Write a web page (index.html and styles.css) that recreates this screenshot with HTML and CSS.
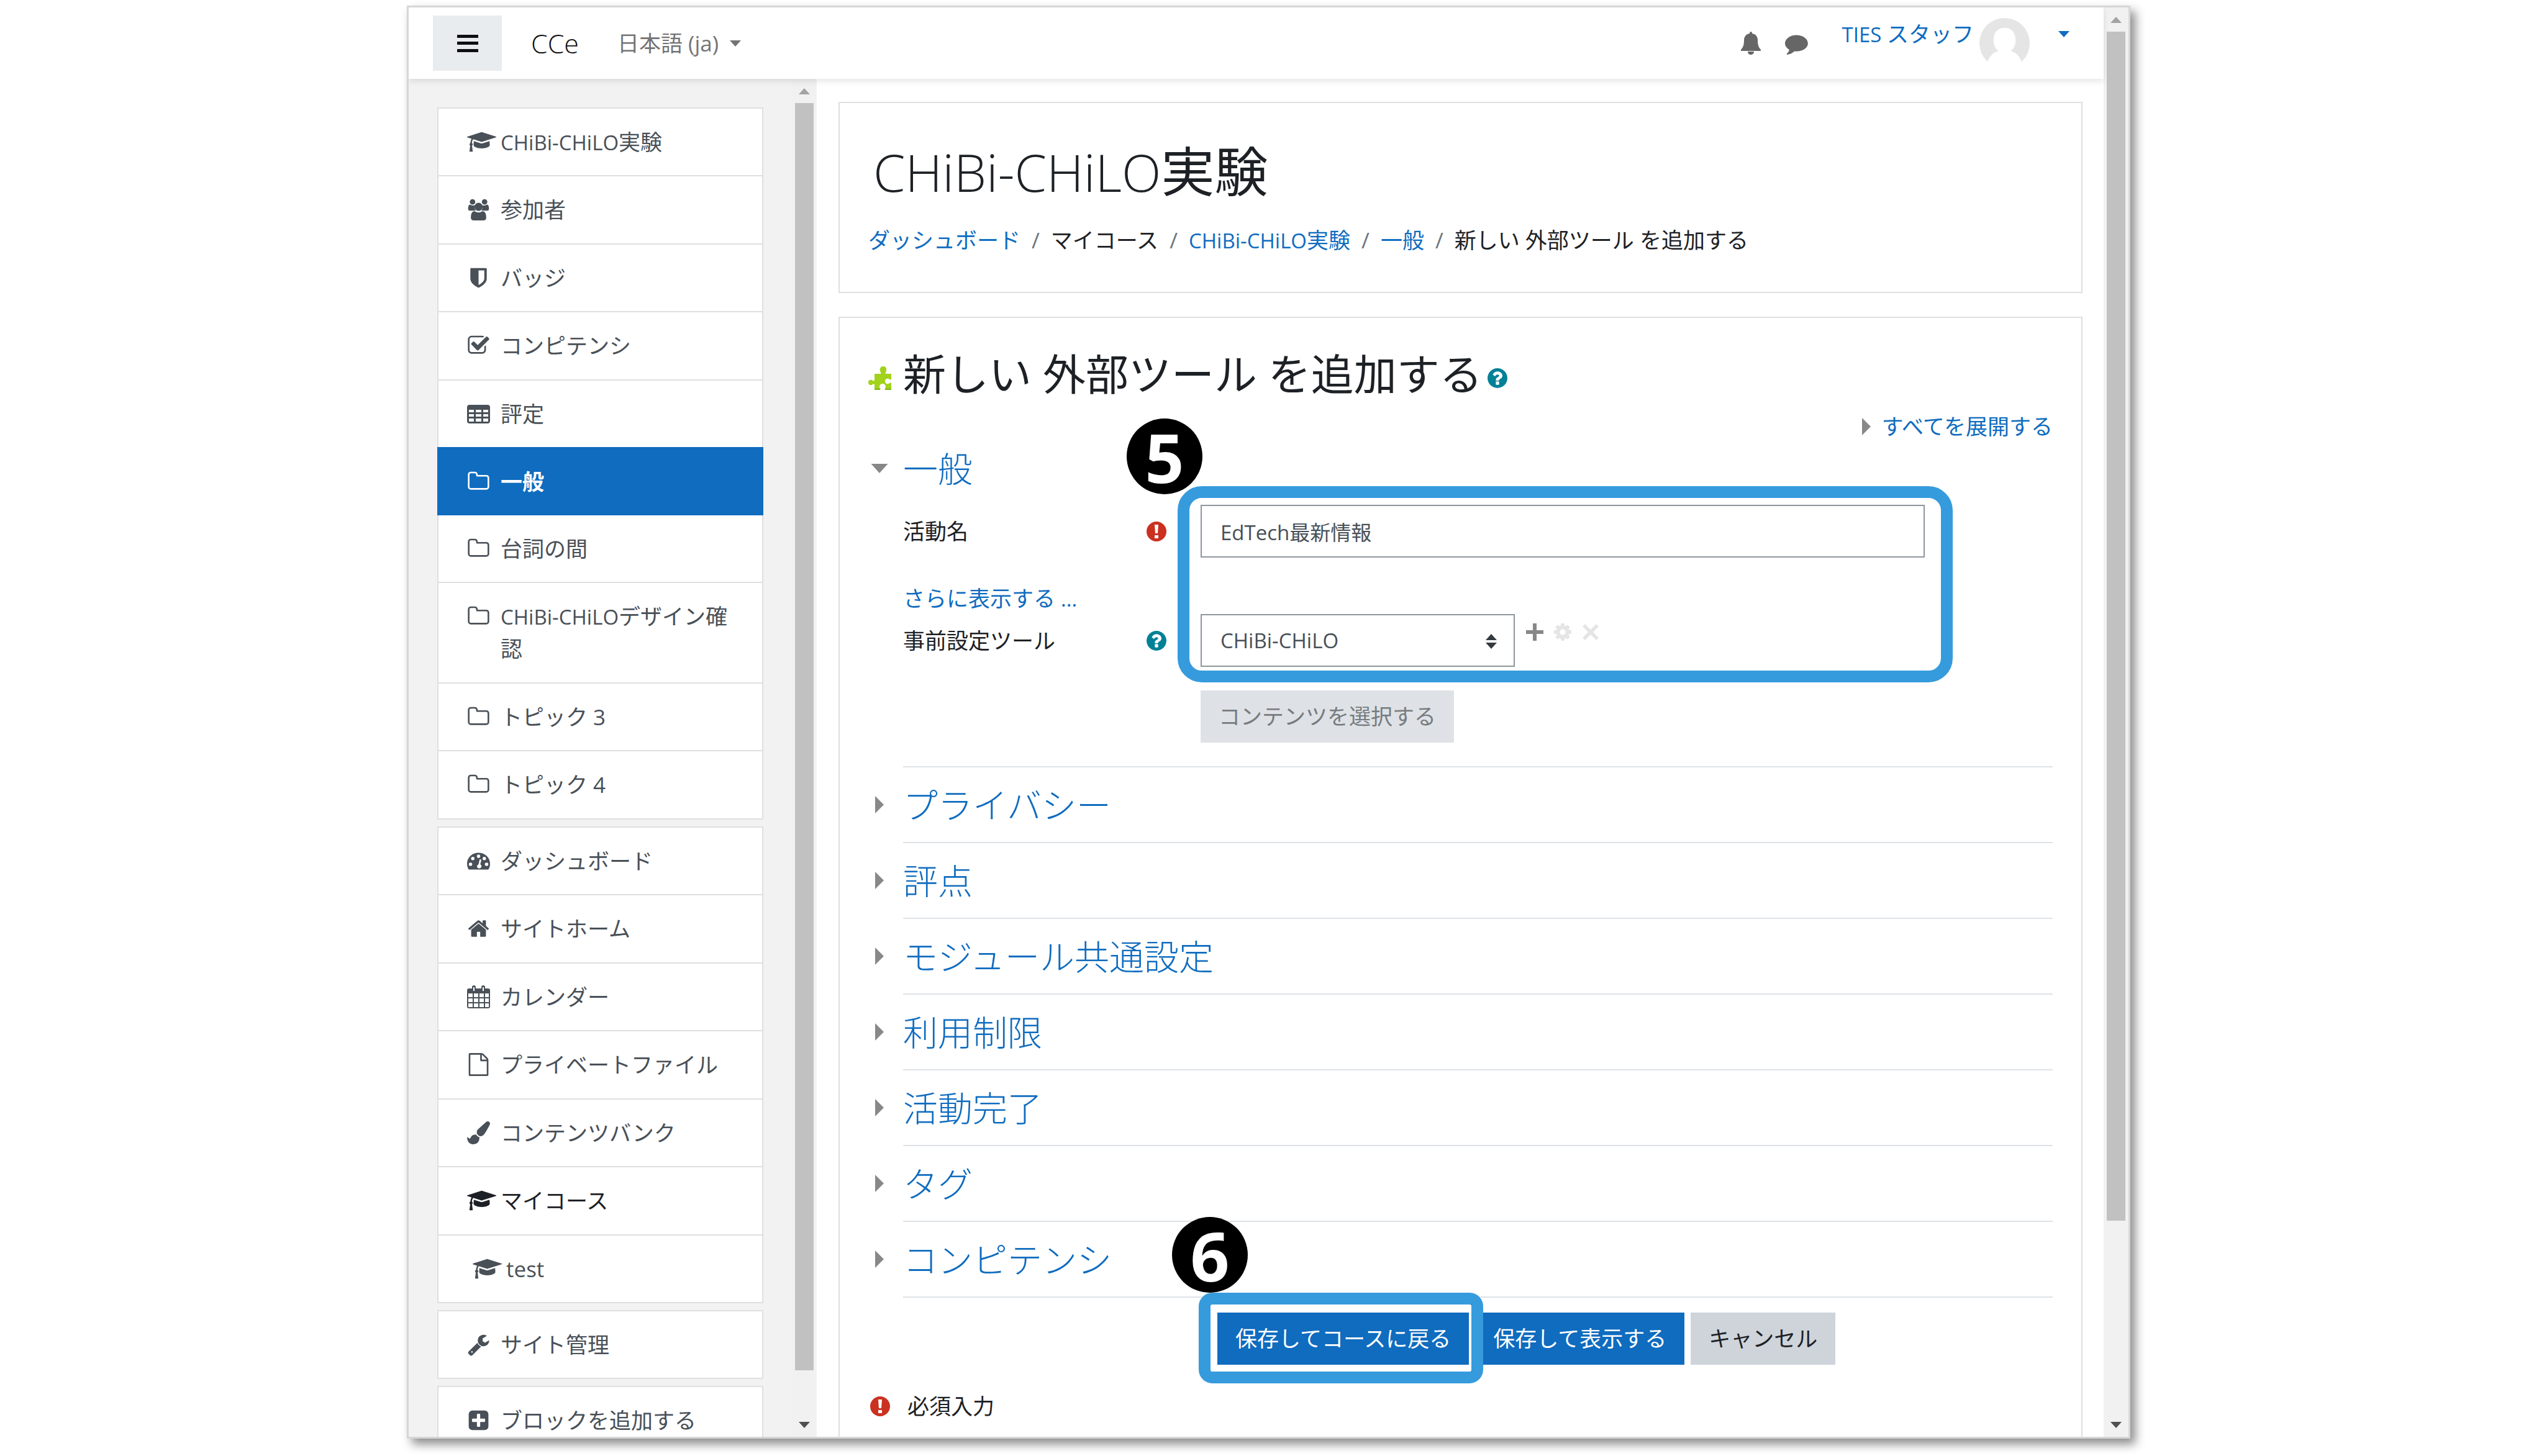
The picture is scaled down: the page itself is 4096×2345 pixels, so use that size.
FILE: index.html
```html
<!DOCTYPE html>
<html lang="ja">
<head>
<meta charset="utf-8">
<meta name="viewport" content="width=device-width, initial-scale=1">
<title>新しい 外部ツール を追加する</title>
<link rel="stylesheet" href="styles.css">
</head>
<body>
<svg class="sprite" aria-hidden="true">
  <symbol id="i-cap" viewBox="0 0 2304 1792"><path d="M1774 836l18 316q4 69-82 128t-235 93.500-323 34.500-323-34.500-235-93.500-82-128l18-316 574 181q22 7 48 7t48-7zm530-324q0 23-22 31l-1120 352q-4 1-10 1t-10-1l-652-206q-43 34-71 111.500t-34 178.500q63 36 63 109 0 69-58 107l58 433q2 14-8 25-9 11-24 11h-192q-15 0-24-11-10-11-8-25l58-433q-58-38-58-107 0-73 65-111 11-207 98-330l-333-104q-22-8-22-31t22-31l1120-352q4-1 10-1t10 1l1120 352q22 8 22 31z"/></symbol>
  <symbol id="i-users" viewBox="0 0 38 42"><circle cx="8" cy="7" r="5"/><circle cx="30" cy="7" r="5"/><path d="M0 20c0-5 1-8 4-8 2 2 6 2 8 1-1 5 0 7 2 10H3c-2 0-3-1-3-3zM38 20c0-5-1-8-4-8-2 2-6 2-8 1 1 5 0 7-2 10h11c2 0 3-1 3-3z"/><circle cx="19" cy="16" r="7.500"/><path d="M5 36c0-8 2-12 7-12 4 3 10 3 14 0 5 0 7 4 7 12 0 3-2 5-5 5H10c-3 0-5-2-5-5z"/></symbol>
  <symbol id="i-shield" viewBox="0 0 1792 1792"><path d="M1344 960v-640h-448v1137q119-63 213-137 235-184 235-360zm192-768v768q0 86-33.500 170.500t-83 150-118 127.500-126.500 103-121 77.500-89.500 49.500-42.500 20q-12 6-26 6t-26-6q-16-7-42.500-20t-89.500-49.500-121-77.500-126.500-103-118-127.500-83-150-33.500-170.500v-768q0-26 19-45t45-19h1152q26 0 45 19t19 45z"/></symbol>
  <symbol id="i-check" viewBox="0 0 1792 1792"><path d="M1472 930v318q0 119-84.500 203.500t-203.500 84.500h-832q-119 0-203.500-84.500t-84.500-203.500v-832q0-119 84.500-203.500t203.500-84.500h832q63 0 117 25 15 7 18 23 3 17-9 29l-49 49q-10 10-23 10-3 0-9-2-23-6-45-6h-832q-66 0-113 47t-47 113v832q0 66 47 113t113 47h832q66 0 113-47t47-113v-254q0-13 9-22l64-64q10-10 23-10 6 0 12 3 20 8 20 29zm231-489l-814 814q-24 24-57 24t-57-24l-430-430q-24-24-24-57t24-57l110-110q24-24 57-24t57 24l263 263 647-647q24-24 57-24t57 24l110 110q24 24 24 57t-24 57z"/></symbol>
  <symbol id="i-table" viewBox="0 0 37 37"><path fill-rule="evenodd" d="M4 4h29q4 0 4 4v22q0 4-4 4H4q-4 0-4-4V8q0-4 4-4zM3 12v4h8v-4zm11 0v4h9v-4zm12 0v4h8v-4zM3 19v4h8v-4zm11 0v4h9v-4zm12 0v4h8v-4zM3 26v5h8v-5zm11 0v5h9v-5zm12 0v5h8v-5z"/></symbol>
  <symbol id="i-folder" viewBox="0 0 1792 1792"><path d="M1600 1312v-704q0-40-28-68t-68-28h-704q-40 0-68-28t-28-68v-64q0-40-28-68t-68-28h-320q-40 0-68 28t-28 68v960q0 40 28 68t68 28h1216q40 0 68-28t28-68zm128-704v704q0 92-66 158t-158 66h-1216q-92 0-158-66t-66-158v-960q0-92 66-158t158-66h320q92 0 158 66t66 158v32h672q92 0 158 66t66 158z"/></symbol>
  <symbol id="i-dash" viewBox="0 0 40 32"><path fill-rule="evenodd" d="M20 2C9 2 0 10 0 21c0 4 1 7 3 10h34c2-3 3-6 3-10C40 10 31 2 20 2zM6 19a3 3 0 1 1 0 6 3 3 0 0 1 0-6zm4-10a3 3 0 1 1 0 6 3 3 0 0 1 0-6zm10-4a3 3 0 1 1 0 6 3 3 0 0 1 0-6zm10 4a3 3 0 1 1 0 6 3 3 0 0 1 0-6zm4 10a3 3 0 1 1 0 6 3 3 0 0 1 0-6zM22 13l3 1-2 8c3 2 3 6-1 7-4 1-7-4-2-7z"/></symbol>
  <symbol id="i-home" viewBox="0 0 1792 1792"><path d="M1472 992v480q0 26-19 45t-45 19h-384v-384h-256v384h-384q-26 0-45-19t-19-45v-480l1-6 575-474 575 474q1 2 1 6zm223-69l-62 74q-8 9-21 11h-3q-13 0-21-7l-692-577-692 577q-12 8-24 7-13-2-21-11l-62-74q-8-10-7-23.500t11-21.500l719-599q32-26 76-26t76 26l244 204v-195q0-14 9-23t23-9h192q14 0 23 9t9 23v408l219 182q10 8 11 21.500t-7 23.500z"/></symbol>
  <symbol id="i-calendar" viewBox="0 0 37 37"><path fill-rule="evenodd" d="M3 5h5V3q0-3 3-3t3 3v2h9V3q0-3 3-3t3 3v2h5q3 0 3 3v26q0 3-3 3H3q-3 0-3-3V8q0-3 3-3zm7-2v6h2V3zm15 0v6h2V3zM2 13v6h7v-6zm9 0v6h7v-6zm9 0v6h7v-6zm9 0v6h6v-6zM2 21v6h7v-6zm9 0v6h7v-6zm9 0v6h7v-6zm9 0v6h6v-6zM2 29v6h7v-6zm9 0v6h7v-6zm9 0v6h7v-6zm9 0v6h6v-6z"/></symbol>
  <symbol id="i-file" viewBox="0 0 1792 1792"><path d="M1596 380q28 28 48 76t20 88v1152q0 40-28 68t-68 28h-1344q-40 0-68-28t-28-68v-1600q0-40 28-68t68-28h896q40 0 88 20t76 48zm-444-244v376h376q-10-29-22-41l-313-313q-12-12-41-22zm384 1528v-1024h-416q-40 0-68-28t-28-68v-416h-768v1536h1280z"/></symbol>
  <symbol id="i-brush" viewBox="0 0 1792 1792"><path d="M1615 0q70 0 122.500 46.500t52.500 116.500q0 63-45 151-332 629-465 752-97 91-218 91-126 0-216.500-92.500t-90.500-219.500q0-128 92-212l638-579q59-54 130-54zm-909 1034q39 76 106.500 130t150.500 76l1 71q4 213-129.500 347t-348.500 134q-123 0-218-46.500t-152.500-127.500-86.500-183-29-220q7 5 41 30t62 44.500 59 36.500 46 17q41 0 55-37 25-66 57.500-112.500t69.500-76 88-47.500 103-25.500 125-10.500z"/></symbol>
  <symbol id="i-wrench" viewBox="0 0 1792 1792"><path d="M448 1472q0-26-19-45t-45-19-45 19-19 45 19 45 45 19 45-19 19-45zm644-420l-682 682q-37 37-90 37-52 0-91-37l-106-108q-38-36-38-90 0-53 38-91l681-681q39 98 114.500 173.500t173.500 114.500zm634-435q0 39-23 106-47 134-164.500 217.500t-258.500 83.500q-185 0-316.500-131.500t-131.500-316.500 131.500-316.500 316.500-131.500q58 0 121.500 16.500t107.500 46.500q16 11 16 28t-16 28l-293 169v224l193 107q5-3 79-48.500t135.500-81 70.500-35.500q15 0 23.500 10t8.500 25z"/></symbol>
  <symbol id="i-plusbox" viewBox="0 0 1792 1792"><path d="M1408 960v-128q0-26-19-45t-45-19h-320v-320q0-26-19-45t-45-19h-128q-26 0-45 19t-19 45v320h-320q-26 0-45 19t-19 45v128q0 26 19 45t45 19h320v320q0 26 19 45t45 19h128q26 0 45-19t19-45v-320h320q26 0 45-19t19-45zm256-544v960q0 119-84.500 203.500t-203.500 84.500h-960q-119 0-203.500-84.500t-84.500-203.500v-960q0-119 84.500-203.500t203.500-84.500h960q119 0 203.500 84.500t84.500 203.500z"/></symbol>
  <symbol id="i-help" viewBox="128 128 1536 1536"><path d="M1024 1376v-192q0-14-9-23t-23-9h-192q-14 0-23 9t-9 23v192q0 14 9 23t23 9h192q14 0 23-9t9-23zm256-672q0-88-55.500-163t-138.500-116-170-41q-243 0-371 213-15 24 8 42l132 100q7 6 19 6 16 0 25-12 53-68 86-92 34-24 86-24 48 0 85.500 26t37.500 59q0 38-20 61t-68 45q-63 28-115.500 86.500t-52.500 125.500v36q0 14 9 23t23 9h192q14 0 23-9t9-23q0-19 21.500-49.500t54.500-49.500q32-18 49-28.500t46-35 44.500-48 28-60.500 12.500-81zm384 192q0 209-103 385.500t-279.500 279.500-385.500 103-385.500-103-279.500-279.500-103-385.500 103-385.500 279.500-279.500 385.500-103 385.500 103 279.500 279.500 103 385.500z"/></symbol>
  <symbol id="i-required" viewBox="0 0 32 32"><path fill-rule="evenodd" d="M16 0a16 16 0 1 1 0 32 16 16 0 0 1 0-32zM13 5l1 14h4l1-14zM13 22v5h6v-5z"/></symbol>
  <symbol id="i-bell" viewBox="0 0 32 37"><path d="M16 0q2 0 2 3c6 1 9 5 9 11 0 8 2 12 5 15v2H0v-2c3-3 5-7 5-15 0-6 3-10 9-11q0-3 2-3zM11 32h10c0 3-2 5-5 5s-5-2-5-5z"/></symbol>
  <symbol id="i-comment" viewBox="0 0 1792 1792"><path d="M1792 896q0 174-120 321.500t-326 233-450 85.500q-70 0-145-8-198 175-460 242-49 14-114 22-17 2-30.500-9t-17.500-29q-3-6 8-32l15-18q60-64 97-107t59-110l26-76q-157-89-247.500-220t-90.500-281q0-130 71-248.500t191-204.500 286-136.500 348-50.500q244 0 450 85.500t326 233 120 321.500z"/></symbol>
  <symbol id="i-gear" viewBox="128 128 1536 1536"><path d="M1152 896q0-106-75-181t-181-75-181 75-75 181 75 181 181 75 181-75 75-181zm512-109v222q0 12-8 23t-20 13l-185 28q-19 54-39 91 35 50 107 138 10 12 10 25t-9 23q-27 37-99 108t-94 71q-12 0-26-9l-138-108q-44 23-91 38-16 136-29 186-7 28-36 28h-222q-14 0-24.500-8.500t-11.500-21.500l-28-184q-49-16-90-37l-141 107q-10 9-25 9-14 0-25-11-126-114-165-168-7-10-7-23 0-12 8-23 15-21 51-66.500t54-70.500q-27-50-41-99l-183-27q-13-2-21-12.500t-8-23.500v-222q0-12 8-23t19-13l186-28q14-46 39-92-40-57-107-138-10-12-10-24 0-10 9-23 26-36 98.500-107.500t94.500-71.500q13 0 26 10l138 107q44-23 91-38 16-136 29-186 7-28 36-28h222q14 0 24.500 8.500t11.500 21.500l28 184q49 16 90 37l142-107q9-9 24-9 13 0 25 10 129 119 165 170 7 8 7 22 0 12-8 23-15 21-51 66.500t-54 70.500q26 50 41 98l183 28q13 2 21 12.500t8 23.500z"/></symbol>
  <symbol id="i-up" viewBox="0 0 18 10"><path d="M9 0l9 10H0z"/></symbol>
  <symbol id="i-down" viewBox="0 0 18 10"><path d="M0 0h18l-9 10z"/></symbol>
  <symbol id="i-right" viewBox="0 0 14 28"><path d="M0 0l14 14L0 28z"/></symbol>
</svg>

<div class="window">
  <div class="app">
    <header class="navbar">
      <button class="menu-toggle" type="button" aria-label="サイドパネル">
        <svg viewBox="0 0 34 28"><path d="M0 0h34v5H0zM0 11h34v5H0zM0 23h34v5H0z"/></svg>
      </button>
      <a class="brand" href="#">CCe</a>
      <a class="language" href="#">日本語 (ja)<svg class="caret"><use href="#i-down"/></svg></a>
      <div class="tools">
        <a href="#" aria-label="通知"><svg class="bell"><use href="#i-bell"/></svg></a>
        <a href="#" aria-label="メッセージ"><svg class="comment"><use href="#i-comment"/></svg></a>
      </div>
      <a class="user" href="#">
        <span><span class="latin">TIES </span>スタッフ</span>
        <svg class="avatar" viewBox="0 0 82 82"><circle cx="41" cy="41" r="41" fill="#e5e5e5"/><path d="M41 16c12 0 18 9 18 20 0 9-4 15-8 18 10 2 18 11 20 28H11c2-17 10-26 20-28-4-3-8-9-8-18 0-11 6-20 18-20z" fill="#fff"/></svg>
        <svg class="caret"><use href="#i-down"/></svg>
      </a>
    </header>

    <div class="shell">
      <aside class="drawer">
        <nav class="drawer-nav">
          <ul class="list">
            <li><a href="#"><svg class="icon wide"><use href="#i-cap"/></svg><span><span class="latin">CHiBi-CHiLO</span>実験</span></a></li>
            <li><a href="#"><svg class="icon"><use href="#i-users"/></svg><span>参加者</span></a></li>
            <li><a href="#"><svg class="icon"><use href="#i-shield"/></svg><span>バッジ</span></a></li>
            <li><a href="#"><svg class="icon"><use href="#i-check"/></svg><span>コンピテンシ</span></a></li>
            <li><a href="#"><svg class="icon"><use href="#i-table"/></svg><span>評定</span></a></li>
            <li class="active"><a href="#"><svg class="icon"><use href="#i-folder"/></svg><span>一般</span></a></li>
            <li><a href="#"><svg class="icon"><use href="#i-folder"/></svg><span>台詞の間</span></a></li>
            <li><a href="#"><svg class="icon"><use href="#i-folder"/></svg><span><span class="latin">CHiBi-CHiLO</span>デザイン確認</span></a></li>
            <li><a href="#"><svg class="icon"><use href="#i-folder"/></svg><span>トピック 3</span></a></li>
            <li><a href="#"><svg class="icon"><use href="#i-folder"/></svg><span>トピック 4</span></a></li>
          </ul>
          <ul class="list">
            <li><a href="#"><svg class="icon"><use href="#i-dash"/></svg><span>ダッシュボード</span></a></li>
            <li><a href="#"><svg class="icon"><use href="#i-home"/></svg><span>サイトホーム</span></a></li>
            <li><a href="#"><svg class="icon"><use href="#i-calendar"/></svg><span>カレンダー</span></a></li>
            <li><a href="#"><svg class="icon"><use href="#i-file"/></svg><span>プライベートファイル</span></a></li>
            <li><a href="#"><svg class="icon"><use href="#i-brush"/></svg><span>コンテンツバンク</span></a></li>
            <li class="heading"><a href="#"><svg class="icon wide"><use href="#i-cap"/></svg><span>マイコース</span></a></li>
            <li class="child"><a href="#"><svg class="icon wide"><use href="#i-cap"/></svg><span>test</span></a></li>
          </ul>
          <ul class="list">
            <li><a href="#"><svg class="icon"><use href="#i-wrench"/></svg><span>サイト管理</span></a></li>
          </ul>
          <ul class="list">
            <li><a href="#"><svg class="icon"><use href="#i-plusbox"/></svg><span>ブロックを追加する</span></a></li>
          </ul>
        </nav>
        <div class="scrollbar drawer-scroll" aria-hidden="true">
          <span class="arrow up"><svg><use href="#i-up"/></svg></span>
          <span class="thumb"></span><span class="rest"></span>
          <span class="arrow"><svg><use href="#i-down"/></svg></span>
        </div>
      </aside>

      <main class="content">
        <section class="card page-header">
          <h1><span class="title-latin">CHiBi-CHiLO</span>実験</h1>
          <ol class="breadcrumb">
            <li><a href="#">ダッシュボード</a></li>
            <li>マイコース</li>
            <li><a href="#"><span class="latin">CHiBi-CHiLO</span>実験</a></li>
            <li><a href="#">一般</a></li>
            <li>新しい 外部ツール を追加する</li>
          </ol>
        </section>

        <section class="card page-body">
          <h2>
            <svg class="puzzle" viewBox="0 0 37 38"><path fill="#a2d21c" d="M10 12h10c1-2 0-3-1-4-1-5 1-8 5-8s6 3 5 8c-1 1-2 2-1 4h9v9c-2 1-3 0-4-1-4-1-6 1-6 4s2 5 6 4c1-1 2-2 4-1v11H27c-1-2 0-3 1-4 0-4-2-6-5-6s-5 2-5 6c1 1 2 2 1 4h-9v-9c-2-1-3 0-4 1-4 1-6-1-6-4s2-5 6-4c1 1 2 2 4 1z"/><path fill="#7fb512" d="M10 36h9v2h-9zM27 36h10v2H27z"/></svg>
            <span>新しい 外部ツール を追加する</span>
            <a class="help" href="#" aria-label="ヘルプ"><svg><use href="#i-help"/></svg></a>
          </h2>
          <a class="expand-all" href="#"><svg class="right"><use href="#i-right"/></svg>すべてを展開する</a>

          <form>
            <h3 class="section-title open"><svg class="down"><use href="#i-down"/></svg><a href="#">一般</a></h3>
            <div class="fields">
              <div class="marked">
                <div class="row">
                  <div class="label"><label for="name">活動名</label><svg class="required"><use href="#i-required"/></svg></div>
                  <div class="control"><input id="name" class="text" type="text" value="EdTech最新情報"></div>
                </div>
                <a class="more" href="#">さらに表示する <span class="latin">...</span></a>
                <div class="row">
                  <div class="label"><label for="tool">事前設定ツール</label><a class="help" href="#" aria-label="ヘルプ"><svg><use href="#i-help"/></svg></a></div>
                  <div class="control">
                    <div class="select">
                      <select id="tool"><option>CHiBi-CHiLO</option></select>
                      <svg class="updown" viewBox="0 0 18 24"><path d="M9 0l9 10H0zM0 14h18l-9 10z"/></svg>
                    </div>
                    <div class="tool-actions">
                      <svg class="add" viewBox="0 0 28 28"><path d="M11 0h6v11h11v6H17v11h-6V17H0v-6h11z"/></svg>
                      <svg><use href="#i-gear"/></svg>
                      <svg viewBox="0 0 28 28"><path d="M5 1l9 9 9-9 4 4-9 9 9 9-4 4-9-9-9 9-4-4 9-9-9-9z"/></svg>
                    </div>
                  </div>
                </div>
                <span class="callout callout-fields"></span>
                <span class="step step-fields">5</span>
              </div>
              <button class="btn select-content" type="button" disabled>コンテンツを選択する</button>
            </div>

            <h3 class="section-title"><svg class="right"><use href="#i-right"/></svg><a href="#">プライバシー</a></h3>
            <h3 class="section-title"><svg class="right"><use href="#i-right"/></svg><a href="#">評点</a></h3>
            <h3 class="section-title"><svg class="right"><use href="#i-right"/></svg><a href="#">モジュール共通設定</a></h3>
            <h3 class="section-title"><svg class="right"><use href="#i-right"/></svg><a href="#">利用制限</a></h3>
            <h3 class="section-title"><svg class="right"><use href="#i-right"/></svg><a href="#">活動完了</a></h3>
            <h3 class="section-title"><svg class="right"><use href="#i-right"/></svg><a href="#">タグ</a></h3>
            <h3 class="section-title"><svg class="right"><use href="#i-right"/></svg><a href="#">コンピテンシ</a></h3>

            <div class="actions">
              <div class="save">
                <button class="btn primary" type="button">保存してコースに戻る</button>
                <span class="callout callout-save"></span>
                <span class="step step-save">6</span>
              </div>
              <button class="btn primary" type="button">保存して表示する</button>
              <button class="btn secondary" type="button">キャンセル</button>
            </div>
            <p class="note"><svg class="required"><use href="#i-required"/></svg>必須入力</p>
          </form>
        </section>
      </main>
    </div>
  </div>
  <div class="scrollbar page-scroll" aria-hidden="true">
    <span class="arrow up"><svg><use href="#i-up"/></svg></span>
    <span class="thumb"></span><span class="rest"></span>
    <span class="arrow"><svg><use href="#i-down"/></svg></span>
  </div>
</div>
</body>
</html>
```
FILE: styles.css
```css
* { box-sizing: border-box; }

body {
  margin: 0;
  padding: 9px 666px 28px 655px;
  background: #fff;
  color: #1d2125;
  font-family: "Open Sans", "Noto Sans CJK JP", sans-serif;
  font-size: 35px;
  line-height: 52px;
}

a { color: #0f6cbf; text-decoration: none; }
ul, ol { margin: 0; padding: 0; list-style: none; }
svg { display: block; flex: none; fill: currentColor; }
.sprite { position: absolute; width: 0; height: 0; }
.latin { font-size: 33px; line-height: 1; }

/* Window frame */
.window {
  display: flex;
  height: calc(100vh - 37px);
  overflow: hidden;
  border: 3px solid #d6d6d6;
  box-shadow: 8px 9px 15px rgba(0, 0, 0, .45);
}
.app { display: flex; flex: 1; flex-direction: column; min-width: 0; }

/* Navbar */
.navbar {
  position: relative;
  z-index: 2;
  display: flex;
  flex: none;
  align-items: center;
  height: 115px;
  padding: 0 55px 0 39px;
  background: #fff;
  box-shadow: 0 4px 10px rgba(0, 0, 0, .1);
}
.menu-toggle {
  display: grid;
  place-items: center;
  width: 111px;
  height: 89px;
  padding: 0;
  border: 0;
  background: #e9ecef;
  color: #0d0f11;
}
.menu-toggle svg { width: 34px; height: 28px; }
.brand { margin-left: 47px; color: #111; font-size: 43px; font-weight: 300; }
.language { display: flex; align-items: center; gap: 18px; margin-left: 62px; color: #747474; }
.caret { width: 18px; height: 10px; }
.tools { display: flex; align-items: center; gap: 39px; margin-left: auto; }
.tools a { color: #666; }
.bell { width: 32px; height: 37px; }
.comment { width: 37px; height: 37px; }
.user { display: flex; align-items: flex-start; margin-left: 55px; }
.user .avatar { width: 81px; height: 81px; margin-left: 9px; }
.user .caret { margin: 21px 0 0 46px; }

/* Scrollbars */
.scrollbar { display: flex; flex: none; flex-direction: column; width: 40px; background: #f1f1f1; }
.arrow { display: grid; flex: none; place-items: center; height: 39px; color: #505050; }
.arrow.up { color: #a3a3a3; }
.arrow svg { width: 18px; height: 10px; }
.thumb { width: 30px; margin: 0 5px; background: #c1c1c1; }
.drawer-scroll .thumb { flex: 30; }
.drawer-scroll .rest { flex: 1; }
.page-scroll .thumb { flex: 31; }
.page-scroll .rest { flex: 5; }

/* Drawer */
.shell { display: flex; flex: 1; min-height: 0; }
.drawer { display: flex; flex: none; width: 657px; overflow: hidden; background: #f2f2f2; }
.drawer-nav {
  display: flex;
  flex: 1;
  flex-direction: column;
  gap: 11px;
  padding: 46px 46px 0;
}
.list { flex: none; border: 2px solid #dfdfdf; border-bottom: 0; background: #fff; }
.list li { padding: 28px 44px 27px 46px; border-bottom: 2px solid #dfdfdf; }
.list li:nth-child(even) { padding-bottom: 28px; }
.list a { display: flex; gap: 17px; color: #495057; }
.list .icon { width: 37px; height: 37px; margin-top: 7px; }
.list .wide { width: 47px; margin-right: -10px; }
.list .active { margin: -2px -2px 0; padding: 30px 46px 30px 48px; border-bottom: 0; background: #0f6cbf; font-weight: 700; }
.list .active a { color: #fff; }
.list .heading a { color: #1d2125; }
.list .child { padding-left: 55px; }

/* Content cards */
.content { flex: 1; min-width: 0; padding: 37px 34px 0 35px; overflow: hidden; }
.card { padding: 47px 46px; border: 2px solid #dfdfdf; background: #fff; }
.page-header { margin-bottom: 38px; padding-bottom: 57px; }
h1, h2, h3 { margin: 0; font-weight: 400; }
h1 { padding-left: 8px; font-size: 86px; line-height: 126px; }
.title-latin { font-size: 83px; font-weight: 300; line-height: 1; }
.breadcrumb { display: flex; margin-top: 22px; }
.breadcrumb li + li::before { padding: 0 18px; color: #6c757d; content: "/"; }

h2 { display: flex; align-items: center; font-size: 69px; line-height: 86px; }
.puzzle { width: 37px; height: 38px; margin: 14px 19px 0 0; }
.help { color: #008196; }
.help svg { width: 32px; height: 32px; }
h2 .help { margin: 14px 0 0 8px; }
.expand-all { display: flex; align-items: center; justify-content: flex-end; gap: 18px; margin-top: 16px; }
.right { width: 14px; height: 28px; color: #888; }
.down { width: 28px; height: 15px; color: #888; }

/* Form */
.section-title {
  position: relative;
  display: flex;
  align-items: center;
  height: 122px;
  margin-left: 56px;
  border-bottom: 2px solid #dee2e6;
  font-size: 56px;
  font-weight: 300;
  line-height: 66px;
}
.section-title svg { position: absolute; left: -45px; }
.section-title.open { height: 66px; margin-top: 8px; border: 0; }
.section-title .down { left: -52px; }
.fields { margin-left: 56px; padding: 26px 0 38px; border-bottom: 2px solid #dee2e6; }
.marked { position: relative; }
.row { display: flex; align-items: center; }
.label { display: flex; flex: none; align-items: center; justify-content: space-between; width: 479px; padding-right: 55px; }
.required { width: 32px; height: 32px; color: #ca3120; }
.control { display: flex; flex: 1; }
.text, .select select {
  height: 85px;
  padding: 0 30px;
  border: 2px solid #8f959e;
  border-radius: 0;
  background: #fff;
  color: #495057;
  font: inherit;
  font-size: 33px;
}
.text { width: 85%; }
.more { display: block; margin-top: 41px; line-height: 50px; }
.select { position: relative; width: 506px; }
.select select { width: 100%; appearance: none; }
.updown { position: absolute; top: 32px; right: 29px; width: 18px; height: 24px; color: #343a40; }
.tool-actions { display: flex; gap: 17px; align-items: center; height: 58px; margin-left: 18px; color: #e5e5e5; }
.tool-actions svg { width: 28px; height: 28px; }
.tool-actions .add { color: #888; }

.btn { height: 84px; padding: 0 29px; border: 0; font: inherit; white-space: nowrap; }
.primary { background: #0f6cbf; color: #fff; }
.secondary { background: #ced4da; color: #1d2125; }
.select-content { display: block; margin: 38px 0 0 479px; background: #dee2e6; color: #777c80; }
.actions { display: flex; gap: 10px; margin: 24px 0 0 562px; }
.save { position: relative; }
.note { display: flex; align-items: center; gap: 28px; margin: 41px 0 0; padding-left: 3px; }

/* Step markers over the form */
.callout { position: absolute; z-index: 1; border: 19px solid #369bdd; pointer-events: none; }
.callout-fields { top: -30px; right: 161px; bottom: -25px; left: 442px; border-radius: 39px; }
.callout-save { top: -32px; right: -23px; bottom: -30px; left: -30px; border-radius: 22px; }
.step {
  position: absolute;
  z-index: 2;
  width: 122px;
  height: 122px;
  border-radius: 50%;
  background: #000;
  color: #fff;
  font-family: "Noto Sans", sans-serif;
  font-size: 110px;
  font-weight: 700;
  line-height: 122px;
  text-align: center;
}
.step-fields { top: -139px; left: 360px; }
.step-save { top: -154px; left: -73px; }
```
